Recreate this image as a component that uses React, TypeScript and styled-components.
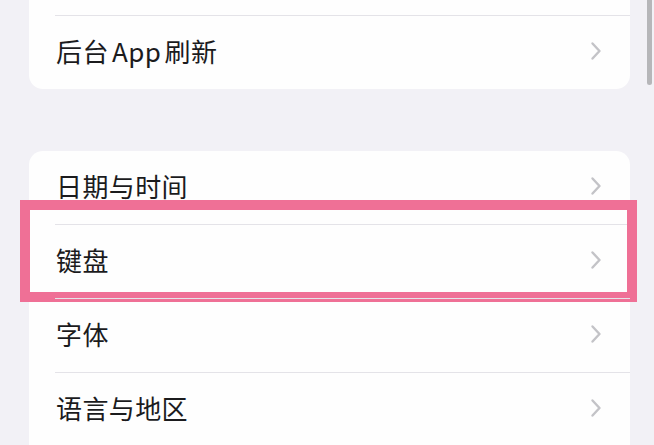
import styled, { createGlobalStyle } from "styled-components";

const GlobalStyle = createGlobalStyle`
    html, body {
        margin: 0;
        padding: 0;
        background: #f2f1f6;
    }
    body {
        font-family: "Noto Sans CJK SC", "Noto Sans", sans-serif;
        -webkit-font-smoothing: antialiased;
    }
`

const Screen = styled.div`
    position: relative;
    width: 654px;
    height: 445px;
    overflow: hidden;
    background: #f2f1f6;
`

const List = styled.div`
    display: flex;
    flex-direction: column;
    gap: 62px;
    padding: 0 24px 0 29px;
    margin-top: -58px;
`

const Card = styled.div`
    background: #fefefe;
    border-radius: 14px;
    display: flex;
    flex-direction: column;
    width: 601px;
`

const Row = styled.div<{ $last?: boolean }>`
    position: relative;
    height: 73px;
    display: flex;
    align-items: center;
    justify-content: space-between;
    padding: 0 28px 3px 27px;
    box-sizing: border-box;
    &::after{
        content: "";
        display: ${props => props.$last ? "none" : "block"};
        position: absolute;
        left: 26px;
        right: 0;
        bottom: -1px;
        height: 1px;
        background: #e4e3e8;
    }
    & + &{
        margin-top: 1px;
    }
`

const Label = styled.span`
    font-size: 26px;
    line-height: 1;
    color: #1b1b1d;
    letter-spacing: 0.4px;
    word-spacing: -3px;
`

const Highlight = styled.div`
    position: absolute;
    left: -9px;
    right: -7px;
    top: -25px;
    bottom: -4px;
    border: 10px solid #ef7096;
    pointer-events: none;
`

const ScrollThumb = styled.div`
    position: absolute;
    top: -6px;
    right: 2px;
    width: 5px;
    height: 91px;
    border-radius: 3px;
    background: #b6b6b9;
`

function Chevron(){
    return <svg width="12" height="20" viewBox="0 0 12 20" fill="none">
        <path d="M2.5 2.5 L9.5 10 L2.5 17.5" stroke="#c3c3c7" strokeWidth="2.4" strokeLinecap="round" strokeLinejoin="round" />
    </svg>
}

type Item = { label: string; marked?: boolean };

const groups: Item[][] = [
    [{ label: "" }, { label: "后台 App 刷新" }],
    [
        { label: "日期与时间" },
        { label: "键盘", marked: true },
        { label: "字体" },
        { label: "语言与地区" },
        { label: "" },
    ],
]

function App(){
    return <>
        <GlobalStyle />
        <Screen>
            <List>
                {groups.map((items, gi) => (
                    <Card key={gi}>
                        {items.map((item, i) => (
                            <Row key={i} $last={i === items.length - 1}>
                                <Label>{item.label}</Label>
                                {item.label && <Chevron />}
                                {item.marked && <Highlight />}
                            </Row>
                        ))}
                    </Card>
                ))}
            </List>
            <ScrollThumb />
        </Screen>
    </>
}

export default App;
